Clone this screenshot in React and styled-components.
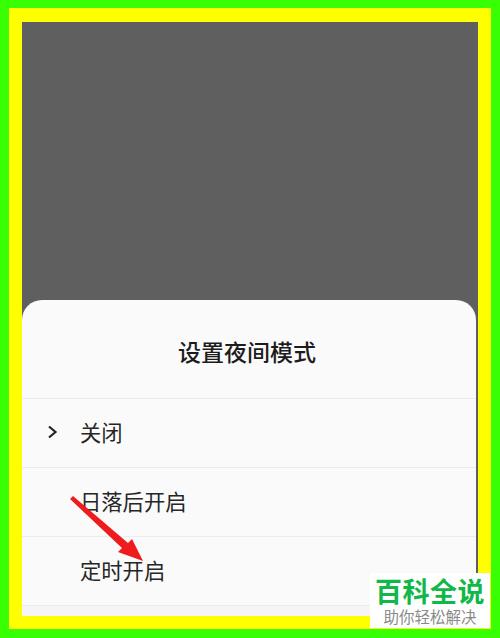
import React from 'react'
import styled, { createGlobalStyle } from 'styled-components'

const Global = createGlobalStyle`
  html, body { margin: 0; padding: 0; }
  body { font-family: "Liberation Sans", "Noto Sans CJK SC", sans-serif; }
`

const Frame = styled.div`
  position: relative;
  width: 500px;
  height: 638px;
  box-sizing: border-box;
  padding: 8px 9px 9px;
  background: #39ff04;
  overflow: hidden;
`

const Border = styled.div`
  height: 100%;
  box-sizing: border-box;
  padding: 14px 13px 13px;
  background: #ffff00;
`

const Screen = styled.div`
  height: 100%;
  display: flex;
  flex-direction: column;
  justify-content: flex-end;
  background: #5f5f5f;
`

const Sheet = styled.div`
  position: relative;
  height: 316px;
  margin-right: 2px;
  box-sizing: border-box;
  background: #fafafa;
  border-radius: 20px 20px 0 0;
  display: flex;
  flex-direction: column;
`

const Title = styled.div`
  height: 99px;
  flex: none;
  display: flex;
  align-items: center;
  justify-content: center;
  padding: 3px 4px 0 0;
  box-sizing: border-box;
  font-size: 23px;
  font-weight: 500;
  color: #1c1c1c;
  border-bottom: 1px solid #ececec;
`

const Row = styled.div`
  height: 69px;
  flex: none;
  box-sizing: border-box;
  display: flex;
  align-items: center;
  padding-left: ${p => (p.$plain ? 58 : 25)}px;
  padding-bottom: 3px;
  font-size: 21.3px;
  color: #262626;
  border-bottom: 1px solid #ececec;
`

const Check = styled.svg`
  width: 11px;
  height: 14px;
  margin-right: 22px;
  flex: none;
`

const Footer = styled.div`
  flex: 1;
  background: #f5f5f5;
`

const Arrow = styled.svg`
  position: absolute;
  left: 48px;
  top: 196px;
  width: 76px;
  height: 68px;
`

const Badge = styled.div`
  position: absolute;
  left: 370px;
  top: 573px;
  width: 120px;
  height: 55px;
  background: #fff;
  display: flex;
  flex-direction: column;
  align-items: center;
`

const BadgeName = styled.div`
  font-size: 27px;
  line-height: 32px;
  margin-top: 4px;
  font-weight: 700;
  letter-spacing: 0.5px;
  color: #0fb848;
`

const BadgeTag = styled.div`
  font-size: 15.5px;
  line-height: 18px;
  color: #8a8a8a;
`

export default function App() {
  return (
    <Frame>
      <Global />
      <Border>
        <Screen>
          <Sheet>
            <Title>设置夜间模式</Title>
            <Row>
              <Check viewBox="0 0 11 14">
                <path d="M2 1.5 L8.5 7 L2 12.5" fill="none" stroke="#222" strokeWidth="2.2" />
              </Check>
              关闭
            </Row>
            <Row $plain>日落后开启</Row>
            <Row $plain>定时开启</Row>
            <Footer />
            <Arrow viewBox="0 0 76 68">
              <path d="M0 3 L3 0 L58 47 L62 43 L73 65 L48 56 L52 52 Z" fill="#ee1c1c" />
            </Arrow>
          </Sheet>
        </Screen>
      </Border>
      <Badge>
        <BadgeName>百科全说</BadgeName>
        <BadgeTag>助你轻松解决</BadgeTag>
      </Badge>
    </Frame>
  )
}
